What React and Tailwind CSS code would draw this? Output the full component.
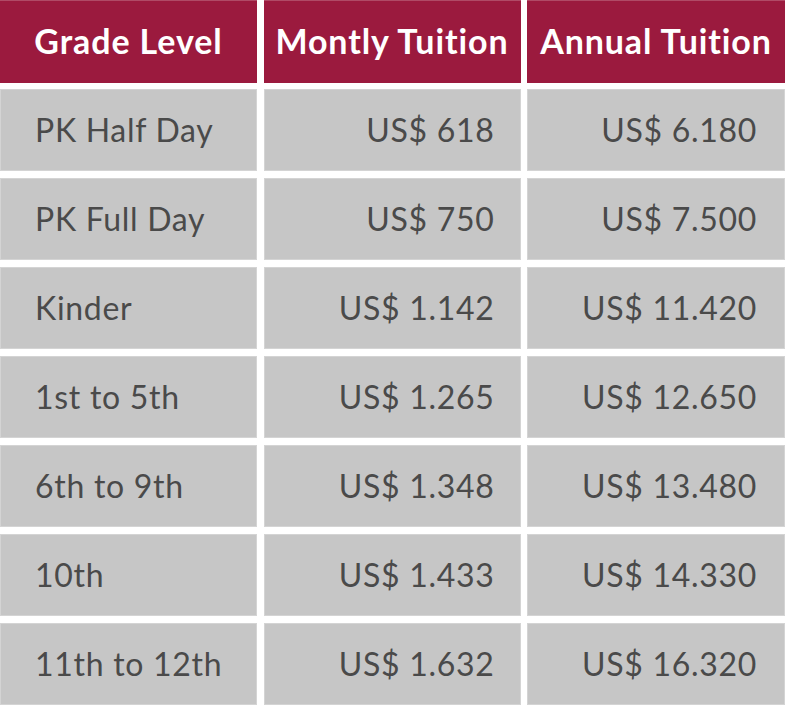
export default function App() {
  const rows = [
    ["PK Half Day", "US$ 618", "US$ 6.180"],
    ["PK Full Day", "US$ 750", "US$ 7.500"],
    ["Kinder", "US$ 1.142", "US$ 11.420"],
    ["1st to 5th", "US$ 1.265", "US$ 12.650"],
    ["6th to 9th", "US$ 1.348", "US$ 13.480"],
    ["10th", "US$ 1.433", "US$ 14.330"],
    ["11th to 12th", "US$ 1.632", "US$ 16.320"],
  ];
  return (
    <div className="w-[785px] h-[708px] overflow-hidden bg-white" style={{ fontFamily: "Lato, 'Open Sans', sans-serif" }}>
      <div className="grid grid-cols-[257px_257px_258px] gap-x-[6.5px] gap-y-[7px] grid-rows-[82px] auto-rows-[82px]">
        {["Grade Level", "Montly Tuition", "Annual Tuition"].map((h) => (
          <div key={h} className="bg-[#9b1a3e] border-t border-[#b04a66] flex items-center justify-center pb-[3px] text-white text-[34px] font-bold tracking-[0.9px] -mb-[1px]">
            {h}
          </div>
        ))}
        {rows.map((r) => (
          <>
            <div key={r[0] + "a"} className="bg-[#c6c6c6] border border-[#d4d4d4] flex items-center pl-[34px] text-[#4a4a4a] text-[32px] tracking-[0.7px]">
              {r[0]}
            </div>
            <div key={r[0] + "b"} className="bg-[#c6c6c6] border border-[#d4d4d4] flex items-center justify-end pr-[25px] text-[#4a4a4a] text-[32px] tracking-[0.7px]">
              {r[1]}
            </div>
            <div key={r[0] + "c"} className="bg-[#c6c6c6] border border-[#d4d4d4] flex items-center justify-end pr-[27px] text-[#4a4a4a] text-[32px] tracking-[0.7px]">
              {r[2]}
            </div>
          </>
        ))}
      </div>
    </div>
  );
}
